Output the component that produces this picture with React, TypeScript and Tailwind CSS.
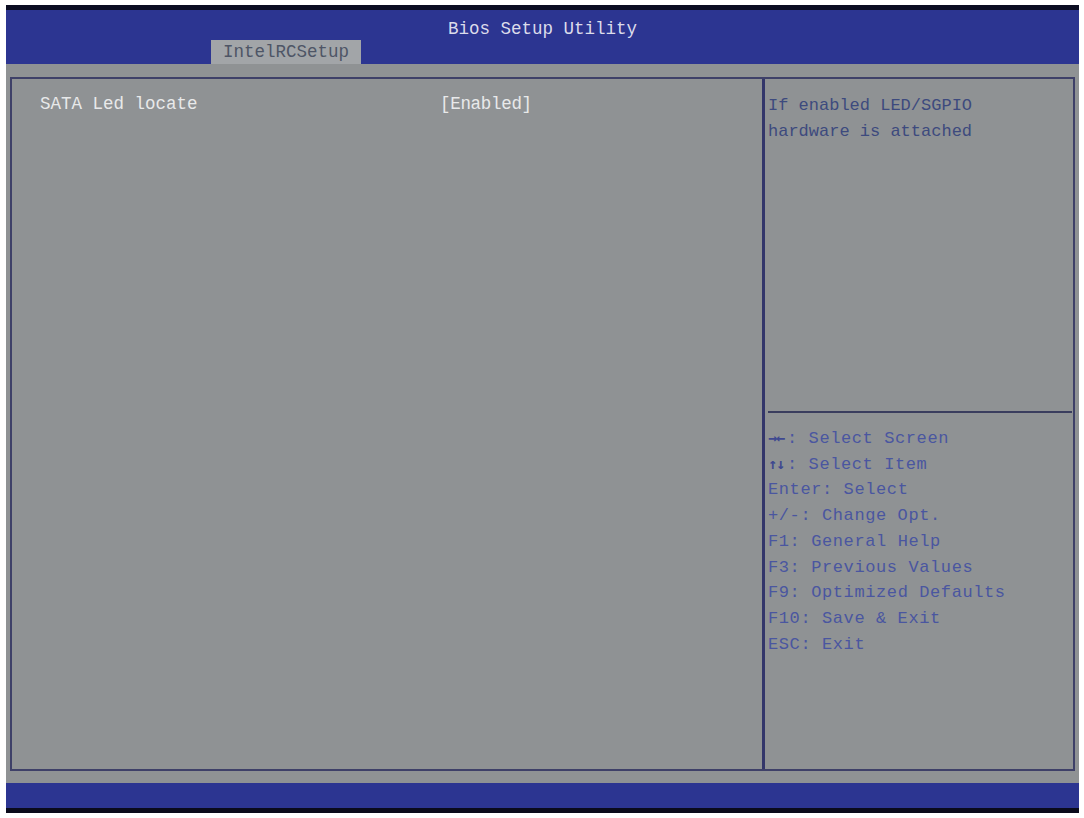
const keys = [
  { k: "\u2192\u2190", d: ": Select Screen", glyph: true },
  { k: "\u2191\u2193", d: ": Select Item", glyph: true },
  { k: "Enter", d: ": Select" },
  { k: "+/-", d: ": Change Opt." },
  { k: "F1", d: ": General Help" },
  { k: "F3", d: ": Previous Values" },
  { k: "F9", d: ": Optimized Defaults" },
  { k: "F10", d: ": Save & Exit" },
  { k: "ESC", d: ": Exit" },
];

export default function App() {
  return (
    <div
      className="w-[1084px] h-[818px] bg-white pt-[5px] pb-[5px] pl-[6px] pr-[5px] overflow-hidden"
      style={{ fontFamily: '"Liberation Mono", "DejaVu Sans Mono", monospace' }}
    >
      <div className="flex h-full flex-col">
        {/* title bar */}
        <div className="relative h-[59px] border-t-[5px] border-[#0b0d22] bg-[#2c3591]">
          <div className="pt-[7px] text-center text-[17.5px] leading-[24px] text-[#dcdceb]">
            Bios Setup Utility
          </div>
          <div className="absolute bottom-0 left-[205px] flex h-[24px] w-[150px] items-center justify-center bg-[#a2a5a8] text-[17.5px] text-[#4e5566]">
            IntelRCSetup
          </div>
        </div>

        {/* main area */}
        <div className="flex flex-1 flex-col bg-[#8f9294] px-[4px] pt-[13px] pb-[12px]">
          <div className="flex flex-1 border-2 border-[#3e4068]">
            <div className="w-[753px] border-r-[3px] border-[#33366a] pl-[28px] pt-[13px]">
              <div className="flex text-[17.5px] leading-[24px] text-[#e8e9ea]">
                <span className="w-[400px]">SATA Led locate</span>
                <span className="tracking-[-0.3px]">[Enabled]</span>
              </div>
            </div>
            <div className="flex flex-1 flex-col pl-[3px] pr-[1px]">
              <div className="h-[332px] pt-[14px] text-[17px] leading-[26px] text-[#3d4a7e]">
                <div>If enabled LED/SGPIO</div>
                <div>hardware is attached</div>
              </div>
              <div className="h-[2px] bg-[#3a3d5e]" />
              <div className="pt-[13px] text-[17px] leading-[25.7px] tracking-[0.6px] text-[#4a56a0]">
                {keys.map((row) => (
                  <div key={row.k}>
                    {row.glyph ? (
                      <span className="inline-block w-[19px] font-['DejaVu_Sans_Mono'] text-[15px] font-bold tracking-[-1px] text-[#3e4890]">
                        {row.k}
                      </span>
                    ) : (
                      row.k
                    )}
                    {row.d}
                  </div>
                ))}
              </div>
            </div>
          </div>
        </div>

        {/* bottom bar */}
        <div className="h-[30px] border-b-[5px] border-[#0a0b1c] bg-[#2c3591]" />
      </div>
    </div>
  );
}
